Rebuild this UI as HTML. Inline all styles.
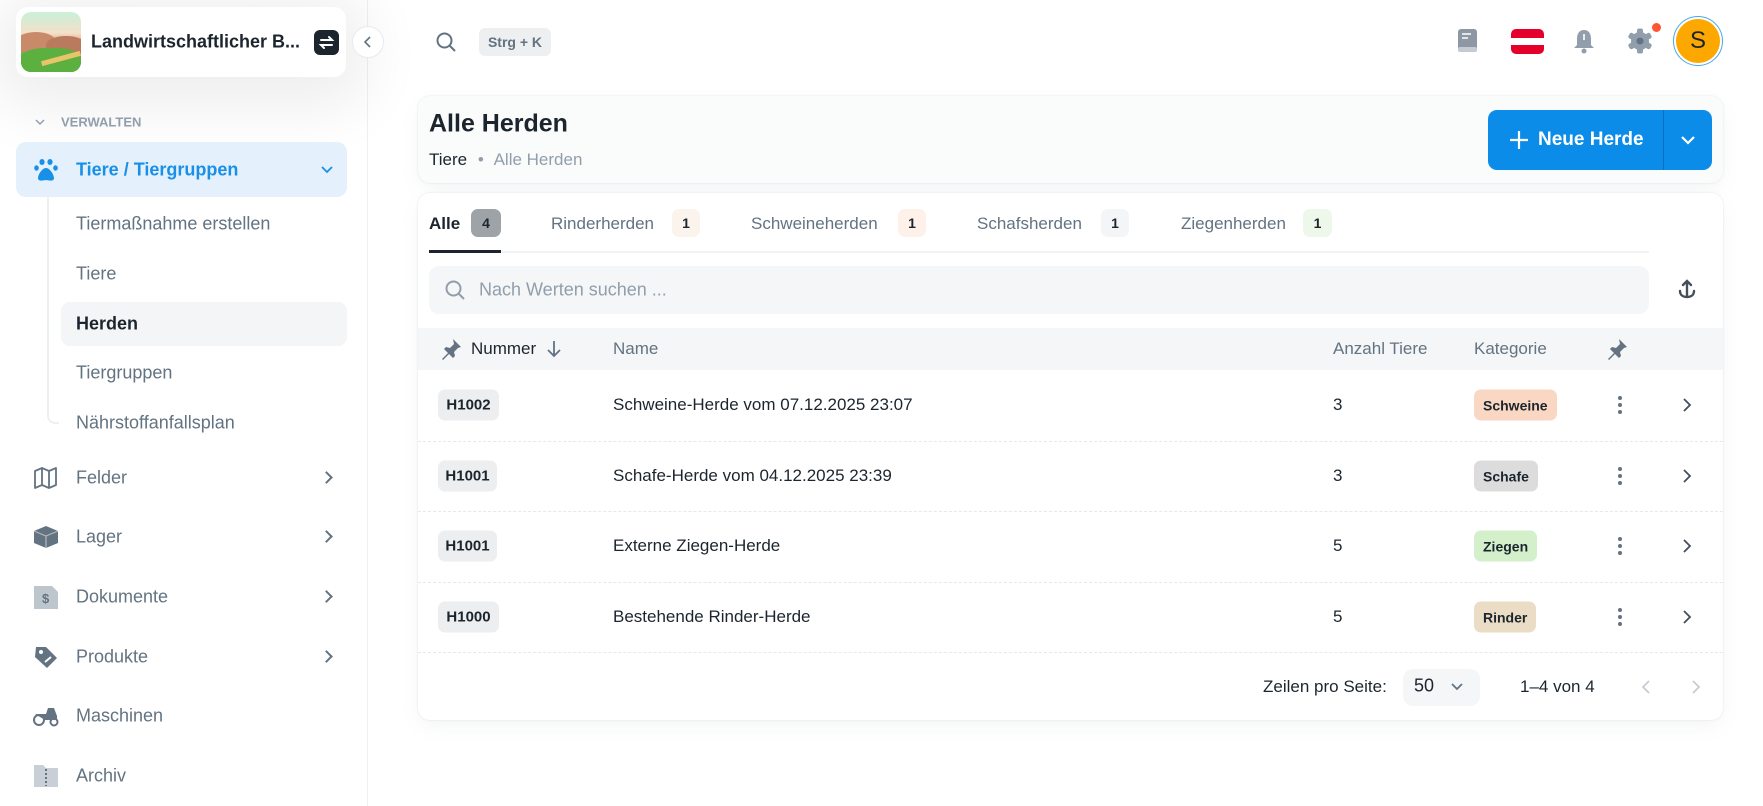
<!DOCTYPE html>
<html><head><meta charset="utf-8"><style>
*{box-sizing:border-box;margin:0;padding:0}
body{width:1763px;height:806px;overflow:hidden;background:#fff;font-family:"Liberation Sans",sans-serif;color:#1c252e;position:relative}
.a{position:absolute}
.sb{left:0;top:0;width:368px;height:806px;background:#fff;border-right:1px solid #eef0f2}
.logo{left:16px;top:7px;width:330px;height:70px;background:#fff;border-radius:12px;box-shadow:0 10px 60px 20px rgba(0,0,0,0.07)}
.nav{font-size:18px;color:#637381;transform:translateY(-50%);white-space:nowrap}
.chev{width:9px;height:9px;border-right:2px solid #637381;border-bottom:2px solid #637381;transform:rotate(-45deg)}
.card{background:#fff;border-radius:12px;box-shadow:0 0 2px rgba(145,158,171,.25),0 8px 20px -4px rgba(145,158,171,.12)}
.tab{font-size:17px;color:#637381;transform:translateY(-50%)}
.bdg{height:28px;border-radius:7px;font-size:14px;font-weight:bold;display:flex;align-items:center;justify-content:center}
.td{font-size:17px;transform:translateY(-50%);white-space:nowrap}
.num{height:31px;width:61px;background:#eceef0;border-radius:7px;font-size:15px;font-weight:bold;display:flex;align-items:center;justify-content:center;transform:translateY(-50%)}
.cat{height:31px;border-radius:7px;font-size:14px;font-weight:bold;display:flex;align-items:center;padding:0 9px;transform:translateY(-50%)}
.dots{width:4px;transform:translateY(-50%)}
.dots i{display:block;width:4px;height:4px;border-radius:2px;background:#637381;margin:3px 0}
.sep{left:418px;width:1305px;border-top:1px dashed #e6e9ec}
.th{font-size:17px;color:#637381;transform:translateY(-50%)}
</style></head><body>
<div class="a sb"></div>
<div class="a logo"></div>
<div class="a" style="left:21px;top:12px;width:60px;height:60px;border-radius:10px;overflow:hidden;background:linear-gradient(#c9f0d8 0%,#f3e0c9 35%,#d89a73 55%,#6cbb4c 62%,#4f9c34 100%)">
<div class="a" style="left:-5px;top:20px;width:40px;height:20px;background:#c98a6a;border-radius:50% 50% 0 0"></div>
<div class="a" style="left:25px;top:24px;width:40px;height:18px;background:#b97a5e;border-radius:50% 50% 0 0"></div>
<div class="a" style="left:0;top:36px;width:60px;height:24px;background:#5cb040;border-radius:40% 40% 0 0"></div>
<div class="a" style="left:20px;top:44px;width:40px;height:5px;background:#e9c46a;transform:rotate(-15deg)"></div></div>
<div class="a" style="left:91px;top:42px;transform:translateY(-50%);font-size:18px;font-weight:bold;color:#1c252e">Landwirtschaftlicher B...</div>
<div class="a" style="left:314px;top:30px;width:25px;height:25px;background:#1c252e;border-radius:6px">
<svg width="25" height="25" viewBox="0 0 25 25" fill="none" stroke="#fff" stroke-width="2" stroke-linecap="round"><path d="M7 10h11l-3-3M18 15H7l3 3"/></svg></div>
<div class="a" style="left:352px;top:26px;width:32px;height:32px;border-radius:16px;background:#fff;border:1px solid #e8eaed"><svg width="30" height="30" viewBox="0 0 30 30" fill="none" stroke="#637381" stroke-width="1.6"><path d="M17 10l-5 5 5 5"/></svg></div>

<svg class="a" style="left:34px;top:116px" width="12" height="12" viewBox="0 0 12 12" fill="none" stroke="#919eab" stroke-width="1.5"><path d="M2 4l4 4 4-4"/></svg>
<div class="a" style="left:61px;top:122px;transform:translateY(-50%);font-size:13px;font-weight:bold;color:#919eab">VERWALTEN</div>
<div class="a" style="left:16px;top:142px;width:331px;height:55px;background:#e4f0fb;border-radius:10px"></div>
<svg class="a" style="left:33px;top:157px" width="26" height="26" viewBox="0 0 26 26" fill="#1890e8"><ellipse cx="9" cy="5" rx="2.6" ry="3"/><ellipse cx="17" cy="5" rx="2.6" ry="3"/><ellipse cx="3.5" cy="11" rx="2.3" ry="2.7"/><ellipse cx="22.5" cy="11" rx="2.3" ry="2.7"/><path d="M13 11c-4 0-8 7-8 10 0 3 3 3 8 2 5 1 8 1 8-2 0-3-4-10-8-10z"/></svg>
<div class="a nav" style="left:76px;top:170px;color:#1890e8;font-size:18px;font-weight:bold">Tiere / Tiergruppen</div>
<svg class="a" style="left:320px;top:164px" width="14" height="12" viewBox="0 0 14 12" fill="none" stroke="#1890e8" stroke-width="1.8"><path d="M2 3l5 5 5-5"/></svg>
<div class="a" style="left:47px;top:197px;width:12px;height:227px;border-left:2px solid #edeff1;border-bottom:2px solid #edeff1;border-bottom-left-radius:8px"></div>
<div class="a" style="left:61px;top:302px;width:286px;height:44px;background:#f4f5f6;border-radius:9px"></div>
<div class="a nav" style="left:76px;top:224px">Tiermaßnahme erstellen</div>
<div class="a nav" style="left:76px;top:274px">Tiere</div>
<div class="a nav" style="left:76px;top:324px;color:#1c252e;font-weight:bold">Herden</div>
<div class="a nav" style="left:76px;top:373px">Tiergruppen</div>
<div class="a nav" style="left:76px;top:423px">Nährstoffanfallsplan</div>

<svg class="a" style="left:33px;top:466px" width="25" height="24" viewBox="0 0 25 24" fill="none" stroke="#637381" stroke-width="1.8" stroke-linejoin="round"><path d="M2 5l7-3 7 3 7-3v17l-7 3-7-3-7 3z M9 2v17 M16 5v17"/></svg>
<div class="a nav" style="left:76px;top:478px">Felder</div>
<svg class="a" style="left:33px;top:525px" width="26" height="24" viewBox="0 0 26 24"><path d="M13 1l12 5v12l-12 5-12-5V6z" fill="#637381"/><path d="M1 6l12 5 12-5M13 11v12" stroke="#fff" stroke-width="1.2" fill="none" opacity=".5"/></svg>
<div class="a nav" style="left:76px;top:537px">Lager</div>
<svg class="a" style="left:33px;top:585px" width="26" height="25" viewBox="0 0 26 25"><path d="M1 1h18l6 6v17H1z" fill="#bdc5cd"/><text x="9" y="18" font-size="13" font-weight="bold" fill="#637381" font-family="Liberation Sans">$</text></svg>
<div class="a nav" style="left:76px;top:597px">Dokumente</div>
<svg class="a" style="left:33px;top:645px" width="26" height="25" viewBox="0 0 26 25"><path d="M3 2h10l11 11-10 10L2 12z" fill="#637381"/><circle cx="8" cy="7" r="2" fill="#fff"/><path d="M12 17l6-5" stroke="#fff" stroke-width="2"/></svg>
<div class="a nav" style="left:76px;top:657px">Produkte</div>
<svg class="a" style="left:32px;top:704px" width="28" height="24" viewBox="0 0 28 24" fill="#637381"><circle cx="7" cy="16" r="5" fill="none" stroke="#637381" stroke-width="2"/><circle cx="22" cy="18" r="3.5" fill="none" stroke="#637381" stroke-width="2"/><path d="M3 10h11l2-6h6l3 8v4H13z"/></svg>
<div class="a nav" style="left:76px;top:716px">Maschinen</div>
<svg class="a" style="left:33px;top:763px" width="26" height="25" viewBox="0 0 26 25"><path d="M1 2h9l3 3h12v19H1z" fill="#c8cfd6"/><path d="M13 6v17" stroke="#637381" stroke-width="2" stroke-dasharray="2 2"/></svg>
<div class="a nav" style="left:76px;top:776px">Archiv</div>
<div class="a chev" style="left:322px;top:473px"></div>
<div class="a chev" style="left:322px;top:532px"></div>
<div class="a chev" style="left:322px;top:592px"></div>
<div class="a chev" style="left:322px;top:652px"></div>

<!-- top bar -->
<svg class="a" style="left:435px;top:31px" width="22" height="22" viewBox="0 0 22 22" fill="none" stroke="#637381" stroke-width="2"><circle cx="9.5" cy="9.5" r="7"/><path d="M15 15l5 5"/></svg>
<div class="a" style="left:479px;top:28px;width:72px;height:28px;background:#edeff1;border-radius:6px;font-size:14px;font-weight:bold;color:#637381;display:flex;align-items:center;justify-content:center">Strg + K</div>
<svg class="a" style="left:1457px;top:28px" width="22" height="26" viewBox="0 0 22 26"><rect x="1" y="1" width="19" height="23" rx="3" fill="#8d98a4"/><rect x="1" y="19" width="19" height="5" rx="2" fill="#c4cbd2"/><path d="M5 6h9M5 10h6" stroke="#fff" stroke-width="1.6"/></svg>
<div class="a" style="left:1511px;top:29px;width:33px;height:25px;border-radius:5px;background:linear-gradient(#e4002b 0 36%,#fff 36% 64%,#e4002b 64%)"></div>
<svg class="a" style="left:1572px;top:28px" width="24" height="26" viewBox="0 0 24 26"><path d="M12 2c5 0 7 4 7 9v6l3 3H2l3-3v-6c0-5 2-9 7-9z" fill="#919eab"/><circle cx="12" cy="23" r="2.5" fill="#919eab"/><path d="M12 6v6" stroke="#fff" stroke-width="1.6"/></svg>
<svg class="a" style="left:1627px;top:28px" width="26" height="26" viewBox="0 0 26 26"><g fill="#919eab" transform="translate(13 13)"><circle r="9"/><rect x="-3" y="-12.5" width="6" height="25" rx="2"/><rect x="-3" y="-12.5" width="6" height="25" rx="2" transform="rotate(60)"/><rect x="-3" y="-12.5" width="6" height="25" rx="2" transform="rotate(120)"/></g><circle cx="13" cy="13" r="3.5" fill="#637381"/></svg>
<div class="a" style="left:1652px;top:23px;width:9px;height:9px;border-radius:5px;background:#ff5630"></div>
<div class="a" style="left:1673px;top:16px;width:50px;height:50px;border-radius:25px;border:1.5px solid #4aa8e8;padding:2px"><div style="width:100%;height:100%;border-radius:50%;background:#fca800;display:flex;align-items:center;justify-content:center;font-size:24px;color:#1c252e">S</div></div>

<!-- header card -->
<div class="a card" style="left:418px;top:96px;width:1305px;height:87px;background:#fafbfb"></div>
<div class="a" style="left:429px;top:124px;transform:translateY(-50%);font-size:25px;font-weight:bold">Alle Herden</div>
<div class="a" style="left:429px;top:160px;transform:translateY(-50%);font-size:17px;white-space:nowrap">Tiere <span style="color:#919eab;margin:0 6px">•</span> <span style="color:#919eab">Alle Herden</span></div>
<div class="a" style="left:1488px;top:110px;width:224px;height:60px;background:#0b8ce9;border-radius:9px"></div>
<div class="a" style="left:1663px;top:110px;width:1px;height:60px;background:#0a6fc0"></div>
<svg class="a" style="left:1509px;top:130px" width="20" height="20" viewBox="0 0 20 20" stroke="#fff" stroke-width="2.2"><path d="M10 1v18M1 10h18"/></svg>
<div class="a" style="left:1538px;top:140px;transform:translateY(-50%);font-size:19px;font-weight:bold;color:#fff">Neue Herde</div>
<svg class="a" style="left:1680px;top:133px" width="16" height="14" viewBox="0 0 16 14" fill="none" stroke="#fff" stroke-width="2.2"><path d="M2 4l6 6 6-6"/></svg>

<!-- table card -->
<div class="a card" style="left:418px;top:193px;width:1305px;height:527px"></div>
<div class="a" style="left:429px;top:251px;width:1220px;height:2px;background:#f0f2f4"></div>
<div class="a" style="left:429px;top:250px;width:72px;height:3px;background:#1c252e"></div>
<div class="a tab" style="left:429px;top:224px;color:#1c252e;font-weight:bold">Alle</div>
<div class="a bdg" style="left:471px;top:209px;width:30px;background:#9ea3a8;color:#1c252e">4</div>
<div class="a tab" style="left:551px;top:224px">Rinderherden</div>
<div class="a bdg" style="left:672px;top:209px;width:28px;background:#faf4ec">1</div>
<div class="a tab" style="left:751px;top:224px">Schweineherden</div>
<div class="a bdg" style="left:898px;top:209px;width:28px;background:#fdf1ea">1</div>
<div class="a tab" style="left:977px;top:224px">Schafsherden</div>
<div class="a bdg" style="left:1101px;top:209px;width:28px;background:#f4f5f6">1</div>
<div class="a tab" style="left:1181px;top:224px">Ziegenherden</div>
<div class="a bdg" style="left:1303px;top:209px;width:29px;background:#eef8ea">1</div>

<div class="a" style="left:429px;top:266px;width:1220px;height:48px;background:#f4f6f8;border-radius:10px"></div>
<svg class="a" style="left:444px;top:279px" width="22" height="22" viewBox="0 0 22 22" fill="none" stroke="#919eab" stroke-width="2"><circle cx="9.5" cy="9.5" r="7"/><path d="M15 15l5 5"/></svg>
<div class="a" style="left:479px;top:290px;transform:translateY(-50%);font-size:18px;color:#919eab">Nach Werten suchen ...</div>
<svg class="a" style="left:1677px;top:279px" width="20" height="22" viewBox="0 0 20 22" fill="none" stroke="#454f5b" stroke-width="2.4" stroke-linecap="round"><path d="M10 2v16M6 6l4-4 4 4M3 12c0 4 3 6 7 6s7-2 7-6"/></svg>

<div class="a" style="left:418px;top:328px;width:1305px;height:42px;background:#f4f6f8"></div>
<svg class="a" style="left:440px;top:338px" width="22" height="22" viewBox="0 0 22 22" fill="#637381"><path d="M13 1l8 8-3 1-4 4 1 4-2 2-4-4-6 6-1-1 6-6-4-4 2-2 4 1 4-4z"/></svg>
<div class="a th" style="left:471px;top:349px;color:#1c252e">Nummer</div>
<svg class="a" style="left:546px;top:340px" width="16" height="18" viewBox="0 0 16 18" fill="none" stroke="#637381" stroke-width="1.8"><path d="M8 1v15M2 10l6 6 6-6"/></svg>
<div class="a th" style="left:613px;top:349px">Name</div>
<div class="a th" style="left:1333px;top:349px">Anzahl Tiere</div>
<div class="a th" style="left:1474px;top:349px">Kategorie</div>
<svg class="a" style="left:1606px;top:338px" width="22" height="22" viewBox="0 0 22 22" fill="#637381"><path d="M13 1l8 8-3 1-4 4 1 4-2 2-4-4-6 6-1-1 6-6-4-4 2-2 4 1 4-4z"/></svg>

<div class="a num" style="left:438px;top:405px">H1002</div>
<div class="a td" style="left:613px;top:405px">Schweine-Herde vom 07.12.2025 23:07</div>
<div class="a td" style="left:1333px;top:405px">3</div>
<div class="a cat" style="left:1474px;top:405px;background:#f9d7c2">Schweine</div>
<div class="a sep" style="top:441px"></div>
<div class="a num" style="left:438px;top:476px;width:59px">H1001</div>
<div class="a td" style="left:613px;top:476px">Schafe-Herde vom 04.12.2025 23:39</div>
<div class="a td" style="left:1333px;top:476px">3</div>
<div class="a cat" style="left:1474px;top:476px;background:#dcdcdc">Schafe</div>
<div class="a sep" style="top:511px"></div>
<div class="a num" style="left:438px;top:546px;width:59px">H1001</div>
<div class="a td" style="left:613px;top:546px">Externe Ziegen-Herde</div>
<div class="a td" style="left:1333px;top:546px">5</div>
<div class="a cat" style="left:1474px;top:546px;background:#d3f0cb">Ziegen</div>
<div class="a sep" style="top:582px"></div>
<div class="a num" style="left:438px;top:617px">H1000</div>
<div class="a td" style="left:613px;top:617px">Bestehende Rinder-Herde</div>
<div class="a td" style="left:1333px;top:617px">5</div>
<div class="a cat" style="left:1474px;top:617px;background:#ebdcc6">Rinder</div>
<div class="a sep" style="top:652px"></div>

<div class="a dots" style="left:1618px;top:405px"><i></i><i></i><i></i></div>
<div class="a dots" style="left:1618px;top:476px"><i></i><i></i><i></i></div>
<div class="a dots" style="left:1618px;top:546px"><i></i><i></i><i></i></div>
<div class="a dots" style="left:1618px;top:617px"><i></i><i></i><i></i></div>
<svg class="a" style="left:1681px;top:396px" width="12" height="18" viewBox="0 0 12 18" fill="none" stroke="#454f5b" stroke-width="1.8"><path d="M3 3l6 6-6 6"/></svg>
<svg class="a" style="left:1681px;top:467px" width="12" height="18" viewBox="0 0 12 18" fill="none" stroke="#454f5b" stroke-width="1.8"><path d="M3 3l6 6-6 6"/></svg>
<svg class="a" style="left:1681px;top:537px" width="12" height="18" viewBox="0 0 12 18" fill="none" stroke="#454f5b" stroke-width="1.8"><path d="M3 3l6 6-6 6"/></svg>
<svg class="a" style="left:1681px;top:608px" width="12" height="18" viewBox="0 0 12 18" fill="none" stroke="#454f5b" stroke-width="1.8"><path d="M3 3l6 6-6 6"/></svg>

<div class="a td" style="left:1263px;top:687px">Zeilen pro Seite:</div>
<div class="a" style="left:1403px;top:669px;width:77px;height:37px;background:#f4f6f8;border-radius:10px"></div>
<div class="a td" style="left:1414px;top:686px;font-size:18px">50</div>
<svg class="a" style="left:1450px;top:682px" width="14" height="10" viewBox="0 0 14 10" fill="none" stroke="#637381" stroke-width="1.8"><path d="M2 2l5 5 5-5"/></svg>
<div class="a td" style="left:1520px;top:687px">1–4 von 4</div>
<svg class="a" style="left:1640px;top:678px" width="12" height="18" viewBox="0 0 12 18" fill="none" stroke="#c4cdd5" stroke-width="1.8"><path d="M9 3L3 9l6 6"/></svg>
<svg class="a" style="left:1690px;top:678px" width="12" height="18" viewBox="0 0 12 18" fill="none" stroke="#c4cdd5" stroke-width="1.8"><path d="M3 3l6 6-6 6"/></svg>
</body></html>
